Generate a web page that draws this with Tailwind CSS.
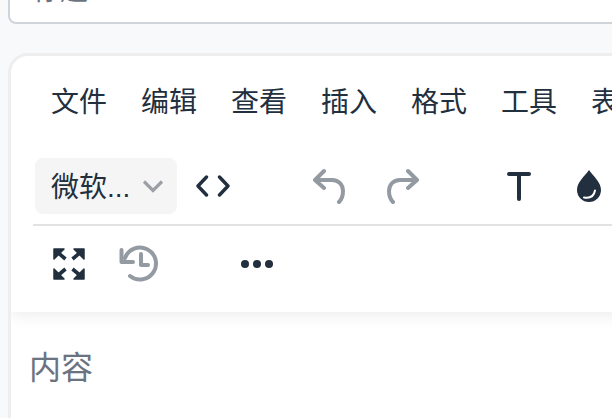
<!DOCTYPE html>
<html lang="zh">

<head>
  <meta charset="UTF-8">
  <title>编辑器</title>
  <script src="https://cdn.jsdelivr.net/npm/@tailwindcss/browser@4"></script>
</head>

<body class="bg-[#f8f9fa] font-['Inter','Noto_Sans_CJK_SC',sans-serif] overflow-hidden">
  <div class="w-[612px] h-[418px] overflow-hidden">

    <!-- title input, scrolled off the top -->
    <div class="ml-2 w-[700px] h-[60px] -mt-[36px] bg-white border-2 border-[#ced4da] rounded-lg text-[28px] leading-[40px] text-[#6b7280] pl-[22px] pt-[4px]">标题</div>

    <!-- editor card -->
    <div class="ml-2 mt-[29px] w-[700px] h-[400px] bg-white border-[3px] border-[#eeeeee] rounded-[20px] overflow-hidden">
      <div class="shadow-[0_4px_16px_rgba(0,0,0,0.07)] rounded-t-[16px] h-[256px] pt-[18px]">

        <div class="flex h-[56px] items-center pl-[40px] text-[28px] text-[#222f3e]">
          <span class="w-[90px]">文件</span>
          <span class="w-[90px]">编辑</span>
          <span class="w-[90px]">查看</span>
          <span class="w-[90px]">插入</span>
          <span class="w-[90px]">格式</span>
          <span class="w-[90px]">工具</span>
          <span class="w-[90px]">表格</span>
        </div>

        <div class="flex h-[56px] mt-[28px] pl-[24px] items-center">
          <div class="flex items-center w-[142px] h-[56px] bg-[#f5f5f5] rounded-lg pl-[16px] text-[28px] text-[#222f3e]">
            <span class="w-[91px] pt-[3px] font-['Liberation_Sans','Noto_Sans_CJK_SC',sans-serif]">微软...</span>
            <svg class="w-[22px] h-[14px]" viewBox="0 0 22 14" fill="none" stroke="#9aa0a6" stroke-width="3.2"><path d="M2 2.500 11 11.500 20 2.500" /></svg>
          </div>
          <div class="flex w-[72px] justify-center">
            <svg class="w-[34px] h-[22px]" viewBox="0 0 34 22" fill="none" stroke="#222f3e" stroke-width="3.4" stroke-linecap="round" stroke-linejoin="round"><path d="M10.500 2 2 11l8.500 9M23.500 2 32 11l-8.500 9" /></svg>
          </div>
          <div class="flex w-[43px]"></div>
          <div class="flex w-[74px] justify-center">
            <svg class="w-[34px] h-[36px]" viewBox="0 0 34 36" fill="none" stroke="#949aa2" stroke-width="4" stroke-linecap="round" stroke-linejoin="round"><path d="M12 3 3 12l9 8M3 12h17c7 0 11 5 11 11 0 4-1 8-4 11" /></svg>
          </div>
          <div class="flex w-[74px] justify-center">
            <svg class="w-[34px] h-[36px]" viewBox="0 0 34 36" fill="none" stroke="#949aa2" stroke-width="4" stroke-linecap="round" stroke-linejoin="round"><path d="M22 3l9 9-9 8M31 12H14C7 12 3 17 3 23c0 4 1 8 4 11" /></svg>
          </div>
          <div class="flex w-[42px]"></div>
          <div class="flex w-[74px] justify-center">
            <svg class="w-[26px] h-[30px]" viewBox="0 0 26 30" fill="none" stroke="#222f3e" stroke-width="4" stroke-linecap="round"><path d="M3 3h20M13 3v25" /></svg>
          </div>
          <div class="flex w-[66px] justify-center">
            <svg class="w-[26px] h-[34px]" viewBox="0 0 26 34"><path fill="#222f3e" d="M13 1C9 7 1 13 1 21a12 12 0 0 0 24 0C25 13 17 7 13 1Z" /><path fill="none" stroke="#fff" stroke-width="2" stroke-linecap="round" d="M8 28.500c6 1 10-1.500 11-7" /></svg>
          </div>
        </div>

        <div class="ml-[22px] h-[2px] mt-[10px] bg-[#e2e2e2]"></div>

        <div class="flex h-[56px] mt-[10px] pl-[22px] items-center">
          <div class="flex w-[72px] justify-center">
            <svg class="w-[32px] h-[32px]" viewBox="0 0 32 32" fill="#222f3e" stroke="#222f3e" stroke-linejoin="round"><path stroke-width="1.500" d="M1 1h10L1 11Z M31 1H21L31 11Z M1 31H11L1 21Z M31 31H21L31 21Z" /><path fill="none" stroke-width="3.600" d="M3 3l9.500 8M29 3l-9.500 8M3 29l9.500-8M29 29l-9.500-8" /></svg>
          </div>
          <div class="flex w-[70px] justify-center">
            <svg class="w-[42px] h-[38px]" viewBox="0 0 42 38" fill="none" stroke="#949aa2" stroke-width="4" stroke-linecap="round" stroke-linejoin="round"><path d="M6 13A16 16 0 1 1 11 31" /><path d="M2.500 5v12H14" /><path d="M22 9v11h7" /></svg>
          </div>
          <div class="flex w-[46px]"></div>
          <div class="flex w-[72px] justify-center gap-[4px]">
            <span class="w-[8px] h-[8px] rounded-full bg-[#222f3e]"></span>
            <span class="w-[8px] h-[8px] rounded-full bg-[#222f3e]"></span>
            <span class="w-[8px] h-[8px] rounded-full bg-[#222f3e]"></span>
          </div>
        </div>
      </div>

      <div class="pl-[18px] pt-[33px] text-[32px] leading-[46px] text-[#6b7280]">内容</div>
    </div>
  </div>
</body>

</html>
